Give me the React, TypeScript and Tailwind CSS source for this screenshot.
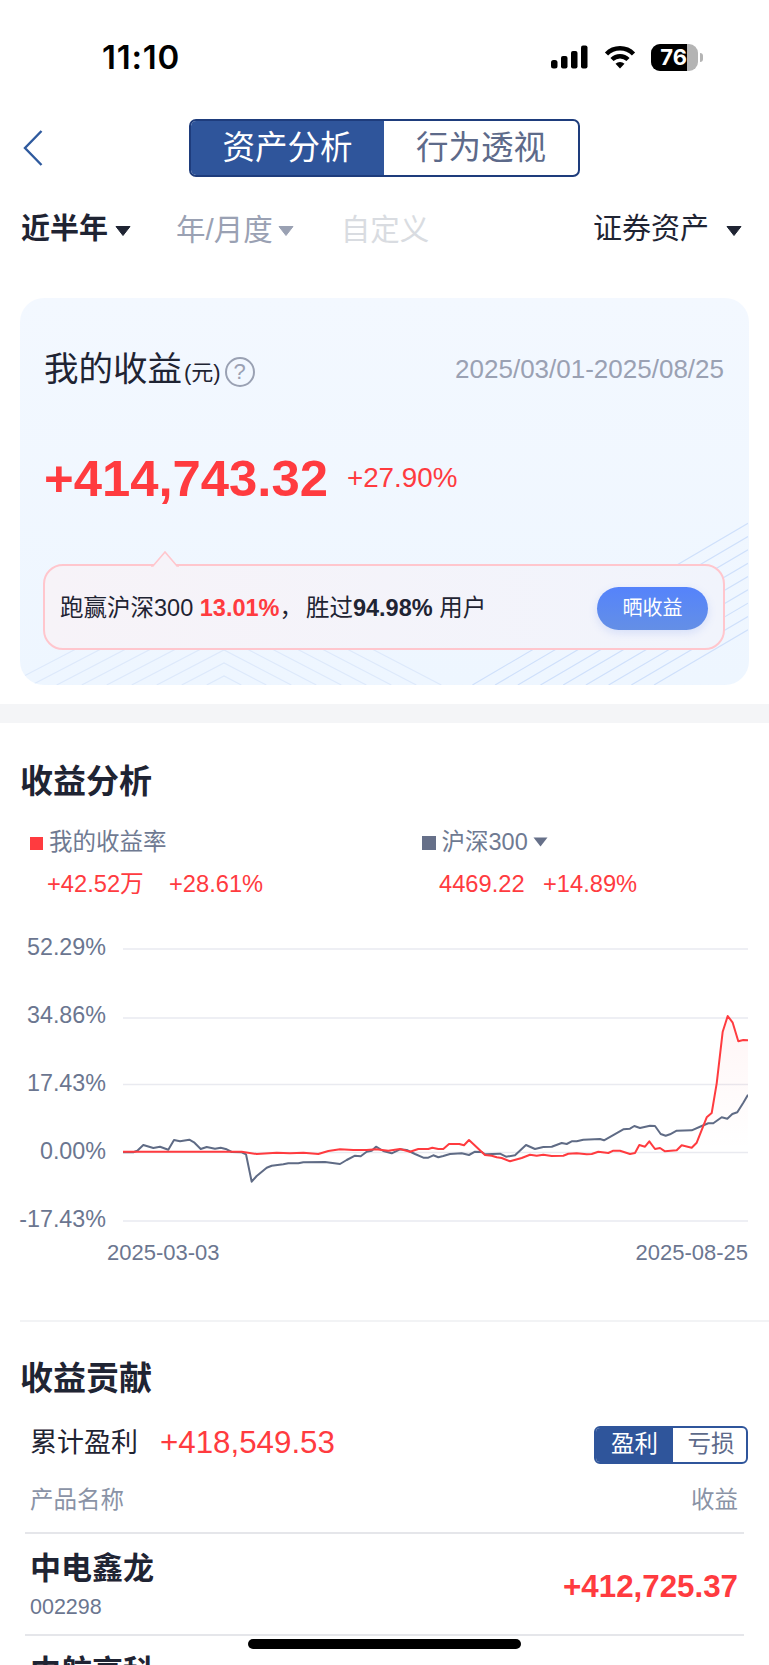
import React from 'react'

const fontStack = "font-['Liberation_Sans','Noto_Sans_CJK_SC',sans-serif]"

// chart points read off the screenshot, [x, y] in crop pixels (3x)
const greyLeft = [[368,697],[400,697],[412,692],[430,675],[460,684],[480,680],[505,689],[522,660],[540,664],[568,659],[582,667],[602,687],[620,681],[645,686],[662,683],[680,688],[695,696],[725,697],[738,703],[755,785],[770,768],[800,743],[815,737],[850,733],[865,730],[895,730],[910,727],[975,726],[1020,732],[1040,720],[1065,707],[1082,709],[1100,695],[1115,692],[1128,680],[1150,693],[1175,700],[1200,688]]
const greyRight = [[20,510],[45,522],[70,533],[85,533],[100,526],[115,532],[130,528],[150,522],[185,520],[207,525],[225,515],[245,516],[255,523],[300,521],[318,530],[345,526],[378,495],[405,507],[430,501],[455,500],[485,489],[500,492],[515,484],[530,484],[550,479],[600,477],[612,481],[670,448],[690,446],[703,438],[720,444],[750,437],[765,438],[782,462],[797,467],[810,463],[830,452],[875,451],[905,438],[925,430],[940,430],[965,412],[982,416],[997,402],[1012,397],[1030,368],[1044,344]]
const redLeft = [[368,695],[725,695],[770,702],[830,698],[870,700],[910,698],[955,702],[985,693],[1020,688],[1060,690],[1100,690],[1128,688],[1165,692],[1200,687]]
const redRight = [[30,515],[55,507],[85,507],[97,503],[115,507],[130,507],[147,492],[178,492],[192,496],[207,480],[255,525],[275,527],[290,532],[305,534],[330,544],[365,534],[390,524],[410,527],[430,524],[455,528],[490,527],[505,521],[530,520],[560,523],[575,522],[595,515],[625,519],[640,512],[660,512],[690,522],[705,519],[718,495],[735,500],[748,484],[765,507],[780,504],[795,514],[830,511],[845,496],[875,503],[890,488],[920,412],[935,399],[950,310],[968,155],[983,108],[998,128],[1015,184],[1030,180],[1044,181]]

const toLine = (left: number[][], right: number[][]) =>
  [
    ...left.map(([x, y]) => `${(x / 3).toFixed(1)},${(920 + y / 3).toFixed(1)}`),
    ...right.map(([x, y]) => `${(400 + x / 3).toFixed(1)},${(980 + y / 3).toFixed(1)}`),
  ].join(' ')

const redLine = toLine(redLeft, redRight)
const greyLine = toLine(greyLeft, greyRight)
const gridYs = [949, 1018, 1084.5, 1152.5, 1221]
const yLabels = ['52.29%', '34.86%', '17.43%', '0.00%', '-17.43%']

const Caret = ({ color }: { color: string }) => (
  <svg width="16" height="10" viewBox="0 0 16 10" className="shrink-0">
    <path d="M1 0.5 H15 L8 9.5 Z" fill={color} stroke={color} strokeLinejoin="round" />
  </svg>
)

const StatusBar = () => (
  <div className="flex h-[28px] mt-[43px] items-center">
    <div className="ml-[102px] w-[448px] text-[33px] leading-none font-semibold text-black font-['Inter',sans-serif] tracking-[0.8px]">
      11:10
    </div>
    <svg width="38" height="24" viewBox="0 0 38 24">
      <rect x="1" y="15" width="6.5" height="8.5" rx="2.5" fill="#000" />
      <rect x="11" y="11" width="6.5" height="12.5" rx="2" fill="#000" />
      <rect x="21" y="6" width="6.5" height="17.5" rx="2" fill="#000" />
      <rect x="31" y="0.5" width="6.5" height="23" rx="2" fill="#000" />
    </svg>
    <svg width="32" height="24" viewBox="0 0 32 24" className="ml-[16px]">
      <path d="M2.5 9 A19 19 0 0 1 29.5 9" fill="none" stroke="#000" strokeWidth="4.5" />
      <path d="M8 14.5 A11.5 11.5 0 0 1 24 14.5" fill="none" stroke="#000" strokeWidth="4.5" />
      <path d="M11.5 18.7 A6.5 6.5 0 0 1 20.5 18.7 L16 23.5 Z" fill="#000" />
    </svg>
    <div className="ml-[15px] flex h-[27px] w-[47px] overflow-hidden rounded-[9px] bg-[#b4b4b4]">
      <div className="flex h-full w-[36px] items-center justify-end bg-black text-[22px] font-bold leading-none text-white font-['Inter',sans-serif]">
        76
      </div>
    </div>
    <div className="ml-[2px] h-[9px] w-[3px] rounded-r-full bg-[#b4b4b4]" />
  </div>
)

const NavBar = () => (
  <div className="mt-[48px] grid h-[58px] grid-cols-[1fr_391px_1fr] items-center">
    <svg width="22" height="38" viewBox="0 0 22 38" className="ml-[22px]">
      <path d="M19.5 2 L3 19 L19.5 36" fill="none" stroke="#2f5a9e" strokeWidth="2.4" />
    </svg>
    <div className="flex h-[58px] overflow-hidden rounded-[7px] border-2 border-[#1e3c7c] bg-white text-[32.5px]">
      <div className="flex w-[193px] items-center justify-center bg-[#2f559b] text-white">资产分析</div>
      <div className="flex flex-1 items-center justify-center text-[#5d6a8a]">行为透视</div>
    </div>
  </div>
)

const FilterRow = () => (
  <div className="mt-[33px] flex h-[40px] items-center pl-[21px] pr-[27px] text-[29.5px]">
    <span className="font-bold text-[29px] text-[#1f2433]">近半年</span>
    <span className="ml-[7px] mt-[1px]"><Caret color="#1f2433" /></span>
    <span className="ml-[45px] text-[#9aa1b3]">年/月度</span>
    <span className="ml-[5px] mt-[1px]"><Caret color="#9aa1b3" /></span>
    <span className="ml-[47px] text-[#d9dce1]">自定义</span>
    <span className="ml-auto text-[#1f2433] text-[29px]">证券资产</span>
    <span className="ml-[17px] mt-[1px]"><Caret color="#1f2433" /></span>
  </div>
)

const ProfitCard = () => (
  <div className="relative mx-[20px] mt-[48px] h-[387px] overflow-hidden rounded-[24px] bg-gradient-to-b from-[#f3f8ff] to-[#eef6ff] pl-[23px] pr-[24px]">
    <svg width="728" height="387" viewBox="20 298 728 387" className="absolute left-0 top-0">
      {[0, 1, 2, 3, 4, 5, 6, 7, 8].map((k) => {
        const x0 = 654 - 22.7 * k
        return <line key={k} x1={x0} y1={685} x2={748} y2={685 - 0.587 * (748 - x0)} stroke="#cfe0fb" strokeWidth="1.2" />
      })}
      {[0, 1, 2, 3, 4, 5, 6, 7, 8].map((k) => {
        const apex = 676 - 13 * k
        const dx = (685 - apex) / 0.52
        return <polyline key={k} points={`${224 - dx},685 224,${apex} ${224 + dx},685`} fill="none" stroke="#dde9fb" strokeWidth="1.2" />
      })}
    </svg>
    <div className="relative flex h-[40px] mt-[51px] items-center pl-px text-[#1f2433]">
      <span className="text-[34.5px] leading-none">我的收益</span>
      <span className="ml-[2px] mt-[8px] text-[22px] leading-none">(元)</span>
      <span className="ml-[4px] mt-[6px] flex h-[30px] w-[30px] items-center justify-center rounded-full border-2 border-[#9aa1b3] text-[22px] leading-none text-[#9aa1b3]">?</span>
      <span className="ml-auto mr-[1px] text-[26px] leading-none text-[#9aa1b3]">2025/03/01-2025/08/25</span>
    </div>
    <div className="relative mt-[60px] flex h-[60px] items-center pl-px text-[#ff3b3f]">
      <span className="text-[50.8px] font-bold leading-none">+414,743.32</span>
      <span className="ml-[19px] mb-[2px] text-[27.8px] leading-none">+27.90%</span>
    </div>
    <div className="relative mt-[55px] flex h-[86px] items-center rounded-[20px] border-2 border-[#ffc6cd] bg-gradient-to-r from-[#f7f3f8] to-[#f1f4fc] pl-[15px] pr-[15px]">
      <svg width="30" height="16" viewBox="0 0 30 16" className="absolute left-[105px] top-[-15px]">
        <path d="M1 15 L3 15 L15 1 L27 15 L29 15" fill="#f6f3f9" stroke="#ffc6cd" strokeWidth="1.6" />
      </svg>
      <span className="mt-[3px] text-[23.5px] leading-none text-[#1f2433] whitespace-pre">
        跑赢沪深300 <span className="font-bold text-[#ff3b3f]">13.01%</span><span className="mr-[3px]">，</span>胜过<span className="font-bold">94.98%</span> 用户
      </span>
      <div className="ml-auto mt-[2px] flex h-[43px] w-[111px] items-center justify-center rounded-full bg-gradient-to-b from-[#5583fb] to-[#648fe6] text-[20px] text-white shadow-[0_3px_8px_rgba(90,130,240,0.18)]">
        晒收益
      </div>
    </div>
  </div>
)

const Chart = () => (
  <div className="mt-[30px] flex h-[300px]">
    <div className="flex w-[106px] flex-col gap-[34px] text-right text-[23.3px] leading-[34px] text-[#6b7690]">
      {yLabels.map((label) => (
        <div key={label} className="h-[34px]">{label}</div>
      ))}
    </div>
    <svg width="625" height="300" viewBox="123 930 625 300" className="ml-[17px]">
      <defs>
        <linearGradient id="redFill" gradientUnits="userSpaceOnUse" x1="0" y1="1015" x2="0" y2="1150">
          <stop offset="0" stopColor="#ff3b3f" stopOpacity="0.05" />
          <stop offset="1" stopColor="#ff3b3f" stopOpacity="0" />
        </linearGradient>
      </defs>
      {gridYs.map((y) => (
        <line key={y} x1="123" x2="748" y1={y} y2={y} stroke="#e9eaf0" strokeWidth="1.5" />
      ))}
      <polygon points={`123,1152 ${redLine} 748,1152`} fill="url(#redFill)" />
      <polyline points={greyLine} fill="none" stroke="#5f6b85" strokeWidth="2" strokeLinejoin="round" />
      <polyline points={redLine} fill="none" stroke="#ff3b3f" strokeWidth="2" strokeLinejoin="round" />
    </svg>
  </div>
)

const AnalysisSection = () => (
  <div>
    <h2 className="mt-[37px] h-[44px] pl-[20px] text-[33px] font-bold leading-[44px] text-[#1f2433]">收益分析</h2>
    <div className="mt-[24px] flex h-[30px] items-center text-[23.5px] text-[#6f7a92]">
      <span className="ml-[30px] h-[13px] w-[13px] bg-[#ff3b3f]" />
      <span className="ml-[6px]">我的收益率</span>
      <span className="ml-[255px] h-[14px] w-[14px] bg-[#667089]" />
      <span className="ml-[6px]">沪深300</span>
      <svg width="15" height="10" viewBox="0 0 15 10" className="ml-[5px] mb-[2px]">
        <path d="M0.5 0.5 H14.5 L7.5 9.5 Z" fill="#667089" />
      </svg>
    </div>
    <div className="mt-[12px] flex h-[30px] items-center text-[23.7px] text-[#ff3b3f]">
      <span className="ml-[47px] w-[122px]">+42.52万</span>
      <span className="w-[270px]">+28.61%</span>
      <span className="w-[104px]">4469.22</span>
      <span>+14.89%</span>
    </div>
    <Chart />
    <div className="mt-[8px] flex h-[28px] items-center justify-between pl-[107px] pr-[21px] text-[22px] text-[#6b7690]">
      <span>2025-03-03</span>
      <span>2025-08-25</span>
    </div>
  </div>
)

const ContributionSection = () => (
  <div>
    <div className="ml-[20px] mt-[54px] h-[2px] bg-[#f2f3f5]" />
    <h2 className="mt-[35px] h-[44px] pl-[20px] text-[33px] font-bold leading-[44px] text-[#1f2433]">收益贡献</h2>
    <div className="mt-[25px] flex h-[38px] items-center pl-[30px] pr-[21px]">
      <span className="pb-[4px] text-[27px] text-[#1f2433]">累计盈利</span>
      <span className="ml-[22px] pb-[4px] text-[31.3px] text-[#ff3b3f]">+418,549.53</span>
      <div className="ml-auto flex h-[38px] w-[154px] overflow-hidden rounded-[6px] border-2 border-[#2f559b] text-[23.5px]">
        <div className="flex w-[77px] items-center justify-center bg-[#2f559b] text-white">盈利</div>
        <div className="flex flex-1 items-center justify-center pl-[3px] text-[#5d6a8a]">亏损</div>
      </div>
    </div>
    <div className="mt-[22px] flex h-[30px] items-center justify-between pl-[30px] pr-[31px] text-[23.5px] text-[#8a93a6]">
      <span>产品名称</span>
      <span>收益</span>
    </div>
    <div className="mx-[25px] mt-[16px] border-t-2 border-[#e5e6ea]">
      <div className="flex h-[100px] items-center justify-between border-b-2 border-[#e5e6ea] pl-[5px] pr-[6px] box-content">
        <div className="flex flex-col">
          <span className="mt-[1px] h-[40px] text-[31px] font-semibold leading-[40px] text-[#1f2433]">中电鑫龙</span>
          <span className="mt-[5px] h-[26px] text-[21.5px] leading-[26px] text-[#6b7690]">002298</span>
        </div>
        <span className="mt-[6px] text-[31.3px] font-bold text-[#ff3b3f]">+412,725.37</span>
      </div>
      <div className="px-[5px] pt-[16px]">
        <span className="block h-[40px] text-[31px] font-semibold leading-[40px] text-[#1f2433]">中航高科</span>
      </div>
    </div>
  </div>
)

export default function App() {
  return (
    <div className={`relative h-[1665px] w-[769px] overflow-hidden bg-white ${fontStack}`}>
      <StatusBar />
      <NavBar />
      <FilterRow />
      <ProfitCard />
      <div className="mt-[19px] h-[19px] bg-[#f4f5f7]" />
      <AnalysisSection />
      <ContributionSection />
      <div className="absolute bottom-[16px] left-[248px] h-[10px] w-[273px] rounded-full bg-black" />
    </div>
  )
}
